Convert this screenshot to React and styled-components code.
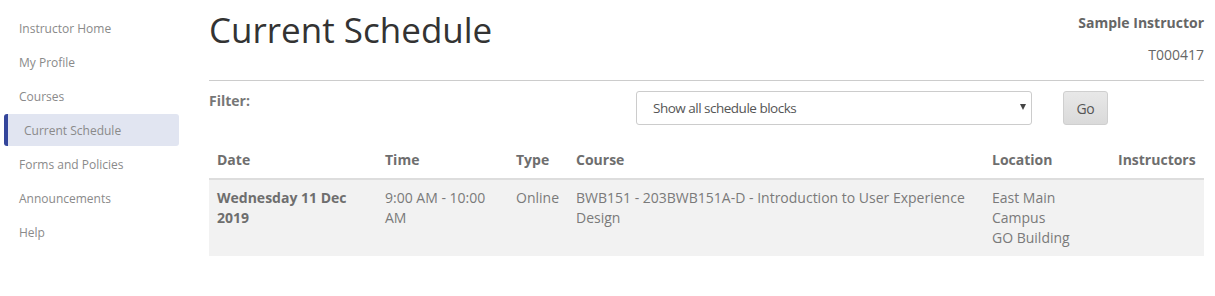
import React from 'react'
import styled, { createGlobalStyle } from 'styled-components'

const GlobalStyle = createGlobalStyle`
  body {
    margin: 0;
    background: #fff;
    font-family: "Open Sans", "Liberation Sans", sans-serif;
  }
`

const navItems = [
  'Instructor Home',
  'My Profile',
  'Courses',
  'Current Schedule',
  'Forms and Policies',
  'Announcements',
  'Help',
]

const columns = [
  { label: 'Date', width: 168 },
  { label: 'Time', width: 131 },
  { label: 'Type', width: 60 },
  { label: 'Course', width: 416 },
  { label: 'Location', width: 126 },
  { label: 'Instructors', width: 94 },
]

function App() {
  return (
    <>
      <GlobalStyle />
      <Page>
        <Sidebar>
          {navItems.map((item) => (
            <NavItem key={item} active={item === 'Current Schedule'}>
              {item}
            </NavItem>
          ))}
        </Sidebar>
        <Main>
          <Header>
            <Title>Current Schedule</Title>
            <UserInfo>
              <UserName>Sample Instructor</UserName>
              <UserId>T000417</UserId>
            </UserInfo>
          </Header>
          <FilterRow>
            <FilterLabel>Filter:</FilterLabel>
            <SelectBox>
              <span>Show all schedule blocks</span>
              <Caret />
            </SelectBox>
            <GoButton>Go</GoButton>
          </FilterRow>
          <Table>
            <colgroup>
              {columns.map((c) => (
                <col key={c.label} style={{ width: c.width }} />
              ))}
            </colgroup>
            <thead>
              <tr>
                {columns.map((c) => (
                  <Th key={c.label}>{c.label}</Th>
                ))}
              </tr>
            </thead>
            <tbody>
              <Row>
                <Td bold>Wednesday 11 Dec 2019</Td>
                <Td>9:00 AM - 10:00 AM</Td>
                <Td>Online</Td>
                <Td>BWB151 - 203BWB151A-D - Introduction to User Experience Design</Td>
                <Td>
                  East Main
                  <br />
                  Campus
                  <br />
                  GO Building
                </Td>
                <Td></Td>
              </Row>
            </tbody>
          </Table>
        </Main>
      </Page>
    </>
  )
}

export default App

const Page = styled.div`
  display: flex;
  width: 1215px;
  min-height: 296px;
`

const Sidebar = styled.nav`
  width: 175px;
  flex-shrink: 0;
  padding: 12px 0 0 4px;
  display: flex;
  flex-direction: column;
  gap: 2px;
`

const NavItem = styled.div`
  height: 32px;
  display: flex;
  align-items: center;
  box-sizing: border-box;
  font-size: 12px;
  color: #8a8a8a;
  padding-left: ${(p) => (p.active ? '16px' : '15px')};
  background: ${(p) => (p.active ? '#e1e5f1' : 'transparent')};
  border-left: ${(p) => (p.active ? '4px solid #34469b' : 'none')};
  border-radius: ${(p) => (p.active ? '3px' : '0')};
`

const Main = styled.main`
  flex: 1;
  padding: 0 11px 0 30px;
`

const Header = styled.div`
  display: flex;
  justify-content: space-between;
  align-items: flex-start;
  border-bottom: 1px solid #cccccc;
  height: 80px;
`

const Title = styled.h1`
  margin: 0;
  padding-top: 6px;
  font-size: 35px;
  font-weight: 400;
  color: #333;
  line-height: 48px;
`

const UserInfo = styled.div`
  text-align: right;
  padding-top: 13px;
  font-size: 14px;
  color: #666;
`

const UserName = styled.div`
  font-weight: 700;
  line-height: 20px;
`

const UserId = styled.div`
  margin-top: 12px;
  line-height: 20px;
`

const FilterRow = styled.div`
  display: flex;
  align-items: flex-start;
  padding-top: 10px;
  height: 56px;
`

const FilterLabel = styled.div`
  width: 427px;
  font-size: 14px;
  font-weight: 700;
  color: #777;
  line-height: 20px;
`

const SelectBox = styled.div`
  width: 396px;
  height: 34px;
  box-sizing: border-box;
  border: 1px solid #ccc;
  border-radius: 3px;
  display: flex;
  align-items: center;
  justify-content: space-between;
  padding: 0 5px 0 16px;
  font-size: 13.5px;
  letter-spacing: -0.5px;
  color: #555;
`

const Caret = styled.span`
  width: 0;
  height: 0;
  border-left: 3px solid transparent;
  border-right: 3px solid transparent;
  border-top: 6px solid #444;
  margin-top: -2px;
`

const GoButton = styled.div`
  margin-left: 31px;
  width: 45px;
  height: 34px;
  box-sizing: border-box;
  border: 1px solid #cfcfcf;
  border-radius: 3px;
  background: linear-gradient(#e8e8e8, #dadada);
  display: flex;
  align-items: center;
  justify-content: center;
  font-size: 14px;
  letter-spacing: -0.3px;
  color: #555;
`

const Table = styled.table`
  width: 100%;
  border-collapse: collapse;
  table-layout: fixed;
  font-size: 14px;
  color: #777;
`

const Th = styled.th`
  text-align: left;
  font-weight: 700;
  color: #6e6e6e;
  padding: 3px 8px 8px;
  line-height: 20px;
  border-bottom: 2px solid #ddd;
`

const Row = styled.tr`
  background: #f2f2f2;
`

const Td = styled.td`
  vertical-align: top;
  padding: 8px 8px 8px;
  line-height: 20px;
  font-weight: ${(p) => (p.bold ? 700 : 400)};
  color: ${(p) => (p.bold ? '#6e6e6e' : '#7a7a7a')};
`
